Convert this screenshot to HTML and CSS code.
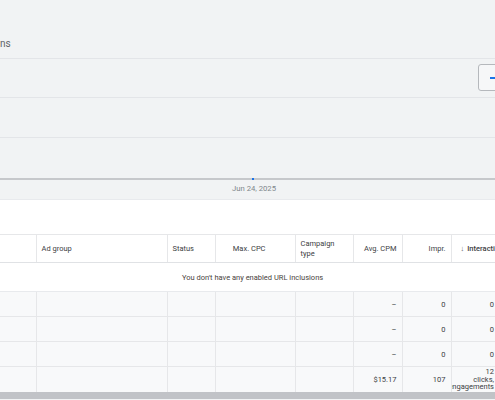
FILE: index.html
```html
<!DOCTYPE html>
<html>
<head>
<meta charset="utf-8">
<link rel="stylesheet" href="styles.css">
</head>
<body>
<div class="page">
  <div class="top">
    <div class="title">ns</div>
    <div class="chart">
      <div class="gl g1"></div>
      <div class="gl g2"></div>
      <div class="gl g3"></div>
      <div class="axis"><span class="dot"></span></div>
      <div class="xlabel">Jun 24, 2025</div>
      <div class="btn"><span class="dash"></span></div>
    </div>
  </div>
  <div class="spacer"></div>
  <div class="tablewrap">
    <table class="tbl">
      <colgroup>
        <col class="w1"><col class="w2"><col class="w3"><col class="w4"><col class="w5"><col class="w6"><col class="w7"><col class="w8">
      </colgroup>
      <thead>
        <tr class="hdr">
          <th></th>
          <th>Ad group</th>
          <th>Status</th>
          <th class="r pr">Max. CPC</th>
          <th>Campaign<br>type</th>
          <th class="r">Avg. CPM</th>
          <th class="r">Impr.</th>
          <th class="sort"><span class="arrow">&#8595;</span>Interactions</th>
        </tr>
      </thead>
      <tbody>
        <tr class="msg"><td colspan="8"><span class="msgtext">You don't have any enabled URL inclusions</span></td></tr>
        <tr class="row"><td></td><td></td><td></td><td></td><td></td><td class="r dash2">–</td><td class="r red">0</td><td class="r">0</td></tr>
        <tr class="row"><td></td><td></td><td></td><td></td><td></td><td class="r dash2">–</td><td class="r red">0</td><td class="r">0</td></tr>
        <tr class="row"><td></td><td></td><td></td><td></td><td></td><td class="r dash2">–</td><td class="r red">0</td><td class="r">0</td></tr>
        <tr class="row total"><td></td><td></td><td></td><td></td><td></td><td class="r">$15.17</td><td class="r">107</td><td class="r"><div class="multi"><span>12</span><span>clicks,</span><span>engagements</span></div></td></tr>
      </tbody>
    </table>
  </div>
  <div class="scroll"></div>
  <div class="below"></div>
</div>
</body>
</html>
```
FILE: styles.css
```css
html, body {
  margin: 0;
  padding: 0;
  background: #ffffff;
}
body {
  font-family: Roboto, "Liberation Sans", Arial, sans-serif;
  color: #3c4043;
  overflow: hidden;
}
.page {
  width: 495px;
  height: 400px;
  overflow: hidden;
  position: relative;
}
.top {
  height: 199px;
  background: #f1f3f4;
  border-bottom: 1px solid #e8eaed;
}
.title {
  height: 58px;
  box-sizing: border-box;
  padding-top: 37px;
  font-size: 10px;
  line-height: 14px;
  color: #5f6368;
}
.chart {
  position: relative;
  height: 141px;
}
.gl {
  border-top: 1px solid #e3e5e8;
}
.g1 { height: 38px; }
.g2 { height: 39px; }
.g3 { height: 40px; }
.axis {
  position: relative;
  height: 0;
  border-top: 2px solid #c6c8cb;
}
.dot {
  position: absolute;
  left: 252px;
  top: -2px;
  width: 2px;
  height: 2px;
  background: #1a73e8;
}
.xlabel {
  padding-left: 232px;
  padding-top: 3px;
  font-size: 7.7px;
  line-height: 12px;
  color: #80868b;
}
.btn {
  position: absolute;
  left: 478px;
  top: 6px;
  width: 30px;
  height: 27px;
  box-sizing: border-box;
  border: 1px solid #b5b8bc;
  border-radius: 3px;
  background: #f6f7f8;
}
.dash {
  position: absolute;
  left: 11px;
  top: 12px;
  width: 8px;
  height: 2px;
  background: #1a73e8;
}
.spacer {
  height: 34px;
}
.tablewrap {
  width: 495px;
  overflow: hidden;
}
.tbl {
  border-collapse: collapse;
  table-layout: fixed;
  width: 499px;
  font-size: 7.5px;
}
.w1 { width: 36px; }
.w2 { width: 131px; }
.w3 { width: 48px; }
.w4 { width: 80px; }
.w5 { width: 58px; }
.w6 { width: 49px; }
.w7 { width: 49px; }
.w8 { width: 48px; }
.tbl th, .tbl td {
  padding: 0 5px;
  overflow: hidden;
  white-space: nowrap;
}
.hdr th {
  height: 27px;
  border-top: 1px solid #e6e7e9;
  border-bottom: 1px solid #e0e2e5;
  border-left: 1px solid #e6e7e9;
  font-weight: 400;
  text-align: left;
  color: #3c4043;
  line-height: 10px;
  vertical-align: middle;
}
.hdr th:first-child { border-left: none; }
.hdr th.r { text-align: right; }
.hdr th.pr { padding-right: 29px; }
.hdr th.sort {
  font-weight: 500;
  padding-left: 9px;
}
.arrow {
  display: inline-block;
  font-weight: 400;
  margin-right: 3px;
  color: #5f6368;
}
.msg td {
  height: 28px;
  border-bottom: 1px solid #e8eaed;
  padding: 0;
  background: #ffffff;
}
.msgtext {
  display: block;
  padding-left: 182px;
  color: #4a4340;
}
.row td {
  height: 24px;
  background: #f8f9fa;
  border-bottom: 1px solid #e6e7e9;
  border-left: 1px solid #e6e7e9;
  color: #3c4043;
  vertical-align: middle;
}
.row td:first-child { border-left: none; }
.row td.r { text-align: right; }
.dash2 { color: #9aa0a6; }
.red { color: #a8533a; }
.total td { border-bottom: none; height: 25px; }
.multi {
  display: flex;
  flex-direction: column;
  align-items: flex-end;
  line-height: 7.5px;
}
.scroll {
  height: 7px;
  background: #c1c3c7;
}
.below {
  height: 10px;
  background: #f1f3f4;
}
```
